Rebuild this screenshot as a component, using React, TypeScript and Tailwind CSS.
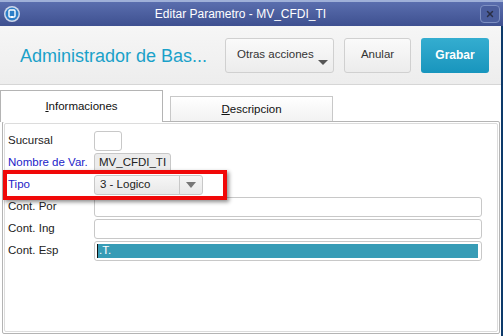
import { X } from 'lucide-react';

const font = { fontFamily: "'Liberation Sans', Arial, sans-serif" };

function Field({ label, blue, children }: { label: string; blue?: boolean; children: React.ReactNode }) {
  return (
    <div className="flex items-center h-[20px]">
      <span className={`w-[86px] text-[11.5px] ${blue ? 'text-[#2222c8]' : 'text-[#222]'}`}>{label}</span>
      {children}
    </div>
  );
}

export default function App() {
  return (
    <div className="w-[503px] h-[336px] overflow-hidden bg-white flex flex-col relative" style={font}>
      {/* window title bar */}
      <div className="h-[26px] flex items-center relative bg-gradient-to-b from-[#5a6eae] to-[#3e5090] border-t-2 border-[#9fb0d8]">
        <svg width="18" height="18" viewBox="0 0 18 18" className="ml-[3px]">
          <circle cx="9" cy="9" r="8" fill="#cfd8ea" />
          <circle cx="9" cy="9" r="6.5" fill="#2d7fc8" />
          <rect x="6" y="5" width="6" height="7" rx="1" fill="none" stroke="#fff" strokeWidth="1.4" />
          <rect x="8" y="11" width="2" height="2" fill="#fff" />
        </svg>
        <span className="flex-1 text-center text-white text-[12px] pr-[20px]">Editar Parametro - MV_CFDI_TI</span>
        <div className="w-[20px] h-[18px] mr-[3px] rounded-[4px] border border-[#7d8fc2] bg-[#4a5d9c] flex items-center justify-center">
          <X size={10} strokeWidth={3.5} className="text-[#2a2f45]" />
        </div>
      </div>

      <div className="flex-1 flex flex-col border-r-2 border-[#0d3a6a]">
        {/* header */}
        <div className="h-[59px] shrink-0 flex items-center bg-gradient-to-b from-[#f6f6f6] to-[#ededed] border-b border-[#d6d6d6]">
          <span className="ml-[20px] text-[18px] text-[#1aa1c9] w-[205px] whitespace-nowrap pt-[2px]">Administrador de Bas...</span>
          <button className="relative w-[109px] h-[35px] rounded-[3px] border border-[#d0d0d0] bg-gradient-to-b from-[#fafafa] to-[#ececec] text-[11.5px] text-[#333] text-left pl-[11px] pb-[1px]">
            Otras acciones
            <span className="absolute right-[5px] bottom-[7px] w-0 h-0 border-l-[5px] border-r-[5px] border-t-[5px] border-l-transparent border-r-transparent border-t-[#555]" />
          </button>
          <button className="w-[67px] h-[35px] ml-[10px] rounded-[3px] border border-[#d0d0d0] bg-gradient-to-b from-[#fafafa] to-[#ececec] text-[11.5px] text-[#333] pb-[1px]">
            Anular
          </button>
          <button className="w-[68px] h-[35px] ml-[10px] rounded-[3px] bg-gradient-to-b from-[#34add0] to-[#1795bd] text-[12px] font-bold text-white pb-[1px]">
            Grabar
          </button>
        </div>

        {/* tabs */}
        <div className="flex items-end h-[36px] shrink-0">
          <div className="w-[163px] h-[32px] border border-b-0 border-[#b4b4b4] bg-white flex items-center justify-center text-[11.5px] text-[#111] relative z-10 -mb-[1px]">
            <span><span className="underline">I</span>nformaciones</span>
          </div>
          <div className="w-[163px] h-[25px] ml-[7px] border border-b-0 border-[#c8c8c8] bg-gradient-to-b from-[#ffffff] to-[#f2f2f2] flex items-center justify-center text-[11.5px] text-[#111] pt-[2px]">
            <span><span className="underline">D</span>escripcion</span>
          </div>
        </div>

        {/* panel */}
        <div className="flex-1 ml-[2px] mr-[1px] mb-[2px] border border-[#b4b4b4] rounded-[2px] p-[1px]">
          <div className="h-full border border-[#dcdcdc] rounded-[2px] pl-[3px] pt-[7px] flex flex-col gap-[2px] relative">
            <Field label="Sucursal">
              <div className="w-[28px] h-[20px] border border-[#c8c8c8] rounded-[3px] bg-white" />
            </Field>
            <Field label="Nombre de Var." blue>
              <div className="h-[20px] px-[4px] border border-[#c8c8c8] rounded-[3px] bg-[#ececec] flex items-center text-[11.5px] text-[#222]">MV_CFDI_TI</div>
            </Field>
            <Field label="Tipo" blue>
              <div className="w-[109px] h-[20px] border border-[#c8c8c8] rounded-[3px] bg-gradient-to-b from-[#f6f6f6] to-[#e8e8e8] flex items-center text-[11.5px] text-[#222]">
                <span className="flex-1 pl-[5px]">3 - Logico</span>
                <span className="w-[23px] h-full border-l border-[#c8c8c8] flex items-center justify-center">
                  <span className="w-0 h-0 border-l-[5px] border-r-[5px] border-t-[6px] border-l-transparent border-r-transparent border-t-[#777]" />
                </span>
              </div>
            </Field>
            <Field label="Cont. Por">
              <div className="w-[388px] h-[20px] border border-[#c8c8c8] rounded-[3px] bg-white" />
            </Field>
            <Field label="Cont. Ing">
              <div className="w-[388px] h-[20px] border border-[#c8c8c8] rounded-[3px] bg-white" />
            </Field>
            <Field label="Cont. Esp">
              <div className="w-[388px] h-[20px] border border-[#c8c8c8] rounded-[3px] bg-white p-[2px] pr-[3px]">
                <div className="h-full bg-[#379cb6] flex items-center text-[11.5px] text-white">
                  <span className="w-[1px] h-[14px] bg-[#111] mr-[1px]" />.T.
                </div>
              </div>
            </Field>

            {/* red highlight over Tipo */}
            <div className="absolute left-[-2px] top-[46px] w-[224px] h-[30px] border-[4px] border-[#f00808] shadow-[2px_2px_4px_rgba(0,0,0,0.45)]" />
          </div>
        </div>
      </div>
    </div>
  );
}
